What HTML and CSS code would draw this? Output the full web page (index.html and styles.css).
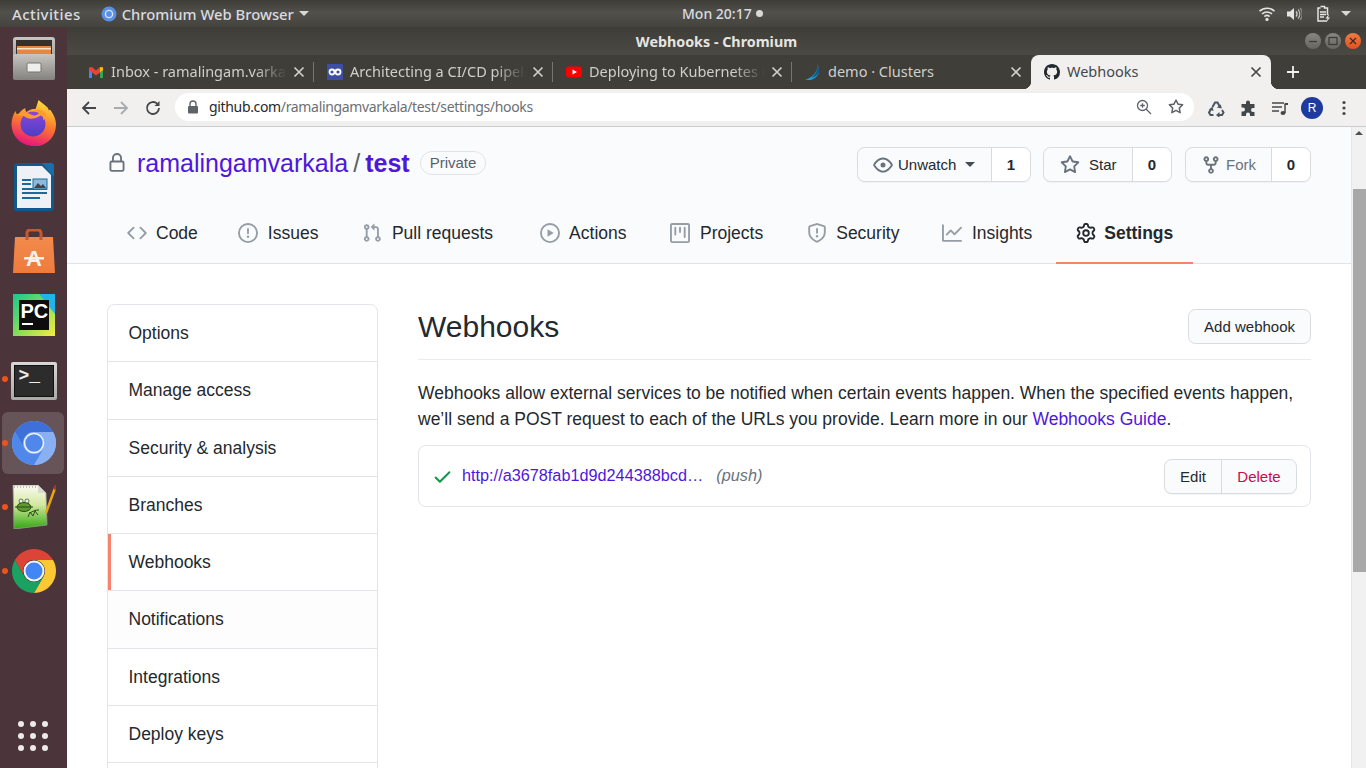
FILE: index.html
```html
<!DOCTYPE html>
<html lang="en">
<head>
    <meta charset="UTF-8">
    <meta name="viewport" content="width=device-width, initial-scale=1.0">
    <title>Webhooks - Chromium</title>
    <link rel="stylesheet" href="styles.css">
</head>
<body>
    <svg class="defs" width="0" height="0">
        <defs>
            <symbol id="i-code" viewBox="0 0 16 16"><path d="M4.72 3.22a.75.75 0 011.06 1.06L2.06 8l3.72 3.72a.75.75 0 11-1.06 1.06L.47 8.53a.75.75 0 010-1.06l4.25-4.25zm6.56 0a.75.75 0 10-1.06 1.06L13.94 8l-3.72 3.72a.75.75 0 101.06 1.06l4.25-4.25a.75.75 0 000-1.06l-4.25-4.25z"/></symbol>
            <symbol id="i-issue" viewBox="0 0 16 16"><path d="M8 1.5a6.5 6.5 0 100 13 6.5 6.5 0 000-13zM0 8a8 8 0 1116 0A8 8 0 010 8zm9 3a1 1 0 11-2 0 1 1 0 012 0zm-.25-6.25a.75.75 0 00-1.5 0v3.5a.75.75 0 001.5 0v-3.5z"/></symbol>
            <symbol id="i-pull" viewBox="0 0 16 16"><path d="M7.177 3.073L9.573.677A.25.25 0 0110 .854v4.792a.25.25 0 01-.427.177L7.177 3.427a.25.25 0 010-.354zM3.75 2.5a.75.75 0 100 1.5.75.75 0 000-1.5zm-2.25.75a2.25 2.25 0 113 2.122v5.256a2.251 2.251 0 11-1.5 0V5.372A2.25 2.25 0 011.5 3.25zM11 2.5h-1V4h1a1 1 0 011 1v5.628a2.251 2.251 0 101.5 0V5A2.5 2.5 0 0011 2.5zm1 10.25a.75.75 0 111.5 0 .75.75 0 01-1.5 0zM3.75 12a.75.75 0 100 1.5.75.75 0 000-1.5z"/></symbol>
            <symbol id="i-play" viewBox="0 0 16 16"><path d="M1.5 8a6.5 6.5 0 1113 0 6.5 6.5 0 01-13 0zM8 0a8 8 0 100 16A8 8 0 008 0zM6.379 5.227A.25.25 0 006 5.442v5.117a.25.25 0 00.379.214l4.264-2.559a.25.25 0 000-.428L6.379 5.227z"/></symbol>
            <symbol id="i-project" viewBox="0 0 16 16"><path d="M1.75 0A1.75 1.75 0 000 1.75v12.5C0 15.216.784 16 1.75 16h12.5A1.75 1.75 0 0016 14.25V1.75A1.75 1.75 0 0014.25 0H1.75zM1.5 1.75a.25.25 0 01.25-.25h12.5a.25.25 0 01.25.25v12.5a.25.25 0 01-.25.25H1.75a.25.25 0 01-.25-.25V1.75zM11.75 3a.75.75 0 00-.75.75v7.5a.75.75 0 001.5 0v-7.5a.75.75 0 00-.75-.75zm-8.25.75a.75.75 0 011.5 0v5.5a.75.75 0 01-1.5 0v-5.5zM8 3a.75.75 0 00-.75.75v3.5a.75.75 0 001.5 0v-3.5A.75.75 0 008 3z"/></symbol>
            <symbol id="i-shield" viewBox="0 0 16 16"><path d="M7.467.133a1.75 1.75 0 011.066 0l5.25 1.68A1.75 1.75 0 0115 3.48V7c0 1.566-.32 3.182-1.303 4.682-.983 1.498-2.585 2.813-5.032 3.855a1.7 1.7 0 01-1.33 0c-2.447-1.042-4.049-2.357-5.032-3.855C1.32 10.182 1 8.566 1 7V3.48a1.75 1.75 0 011.217-1.667l5.25-1.68zm.61 1.429a.25.25 0 00-.153 0l-5.25 1.68a.25.25 0 00-.174.238V7c0 1.358.275 2.666 1.057 3.86.784 1.194 2.121 2.34 4.366 3.297a.2.2 0 00.154 0c2.245-.956 3.582-2.104 4.366-3.298C13.225 9.666 13.5 8.36 13.5 7V3.48a.25.25 0 00-.174-.237l-5.25-1.68zM9 10.5a1 1 0 11-2 0 1 1 0 012 0zm-.25-5.75a.75.75 0 10-1.5 0v3a.75.75 0 001.5 0v-3z"/></symbol>
            <symbol id="i-graph" viewBox="0 0 16 16"><path d="M1.5 1.75a.75.75 0 00-1.5 0v12.5c0 .414.336.75.75.75h14.5a.75.75 0 000-1.5H1.5V1.75zm14.28 2.53a.75.75 0 00-1.06-1.06L10 7.94 7.53 5.47a.75.75 0 00-1.06 0L3.22 8.72a.75.75 0 001.06 1.06L7 7.06l2.47 2.47a.75.75 0 001.06 0l5.25-5.25z"/></symbol>
            <symbol id="i-gear" viewBox="0 0 16 16"><path d="M7.429 1.525a6.593 6.593 0 011.142 0c.036.003.108.036.137.146l.289 1.105c.147.56.55.967.997 1.189.174.086.341.183.501.29.417.278.97.423 1.53.27l1.102-.303c.11-.03.175.016.195.046.219.31.41.641.573.989.014.031.022.11-.059.19l-.815.806c-.411.406-.562.957-.53 1.456a4.588 4.588 0 010 .582c-.032.499.119 1.05.53 1.456l.815.806c.08.08.073.159.059.19a6.494 6.494 0 01-.573.99c-.02.029-.086.074-.195.045l-1.103-.303c-.559-.153-1.112-.008-1.529.27-.16.107-.327.204-.5.29-.449.222-.851.628-.998 1.189l-.289 1.105c-.029.11-.101.143-.137.146a6.613 6.613 0 01-1.142 0c-.036-.003-.108-.037-.137-.146l-.289-1.105c-.147-.56-.55-.967-.997-1.189a4.502 4.502 0 01-.501-.29c-.417-.278-.97-.423-1.53-.27l-1.102.303c-.11.03-.175-.016-.195-.046a6.492 6.492 0 01-.573-.989c-.014-.031-.022-.11.059-.19l.815-.806c.411-.406.562-.957.53-1.456a4.587 4.587 0 010-.582c.032-.499-.119-1.05-.53-1.456l-.815-.806c-.08-.08-.073-.159-.059-.19a6.44 6.44 0 01.573-.99c.02-.029.086-.075.195-.045l1.103.303c.559.153 1.112.008 1.529-.27.16-.107.327-.204.5-.29.449-.222.851-.628.998-1.189l.289-1.105c.029-.11.101-.143.137-.146zM8 0c-.236 0-.47.01-.701.03-.743.065-1.29.615-1.458 1.261l-.29 1.106c-.017.066-.078.158-.211.224a5.994 5.994 0 00-.668.386c-.123.082-.233.09-.3.071L3.27 2.776c-.644-.177-1.392.02-1.82.63a7.977 7.977 0 00-.704 1.217c-.315.675-.111 1.422.363 1.891l.815.806c.05.048.098.147.088.294a6.084 6.084 0 000 .772c.01.147-.038.246-.088.294l-.815.806c-.474.469-.678 1.216-.363 1.891.2.428.436.835.704 1.218.428.609 1.176.806 1.82.63l1.103-.303c.066-.019.176-.011.299.071.213.143.436.272.668.386.133.066.194.158.212.224l.289 1.106c.169.646.715 1.196 1.458 1.26a8.094 8.094 0 001.402 0c.743-.064 1.29-.614 1.458-1.26l.29-1.106c.017-.066.078-.158.211-.224a5.98 5.98 0 00.668-.386c.123-.082.233-.09.3-.071l1.102.302c.644.177 1.392-.02 1.82-.63.268-.382.505-.789.704-1.217.315-.675.111-1.422-.364-1.891l-.814-.806c-.05-.048-.098-.147-.088-.294a6.1 6.1 0 000-.772c-.01-.147.039-.246.088-.294l.814-.806c.475-.469.679-1.216.364-1.891a7.992 7.992 0 00-.704-1.218c-.428-.609-1.176-.806-1.82-.63l-1.103.303c-.066.019-.176.011-.299-.071a5.991 5.991 0 00-.668-.386c-.133-.066-.194-.158-.212-.224L10.16 1.29C9.99.645 9.444.095 8.701.031A8.094 8.094 0 008 0zm1.5 8a1.5 1.5 0 11-3 0 1.5 1.5 0 013 0zM11 8a3 3 0 11-6 0 3 3 0 016 0z"/></symbol>
            <symbol id="i-lock" viewBox="0 0 16 16"><path d="M4 4v2h-.25A1.75 1.75 0 002 7.75v5.5c0 .966.784 1.75 1.75 1.75h8.5A1.75 1.75 0 0014 13.25v-5.5A1.75 1.75 0 0012.25 6H12V4a4 4 0 10-8 0zm6.5 2V4a2.5 2.5 0 00-5 0v2h5zM12 7.5h.25a.25.25 0 01.25.25v5.5a.25.25 0 01-.25.25h-8.5a.25.25 0 01-.25-.25v-5.5a.25.25 0 01.25-.25H12z"/></symbol>
            <symbol id="i-eye" viewBox="0 0 16 16"><path d="M1.679 7.932c.412-.621 1.242-1.75 2.366-2.717C5.175 4.242 6.527 3.5 8 3.5c1.473 0 2.824.742 3.955 1.715 1.124.967 1.954 2.096 2.366 2.717a.119.119 0 010 .136c-.412.621-1.242 1.75-2.366 2.717C10.825 11.758 9.473 12.5 8 12.5c-1.473 0-2.824-.742-3.955-1.715C2.92 9.818 2.09 8.69 1.679 8.068a.119.119 0 010-.136zM8 2c-1.981 0-3.67.992-4.933 2.078C1.797 5.169.88 6.423.43 7.1a1.619 1.619 0 000 1.798c.45.678 1.367 1.932 2.637 3.024C4.329 13.008 6.019 14 8 14c1.981 0 3.67-.992 4.933-2.078 1.27-1.091 2.187-2.345 2.637-3.023a1.619 1.619 0 000-1.798c-.45-.678-1.367-1.932-2.637-3.023C11.671 2.992 9.981 2 8 2zm0 8a2 2 0 100-4 2 2 0 000 4z"/></symbol>
            <symbol id="i-star" viewBox="0 0 16 16"><path d="M8 .25a.75.75 0 01.673.418l1.882 3.815 4.21.612a.75.75 0 01.416 1.279l-3.046 2.97.719 4.192a.75.75 0 01-1.088.791L8 12.347l-3.766 1.98a.75.75 0 01-1.088-.79l.72-4.194L.818 6.374a.75.75 0 01.416-1.28l4.21-.611L7.327.668A.75.75 0 018 .25zm0 2.445L6.615 5.5a.75.75 0 01-.564.41l-3.097.45 2.24 2.184a.75.75 0 01.216.664l-.528 3.084 2.769-1.456a.75.75 0 01.698 0l2.77 1.456-.53-3.084a.75.75 0 01.216-.664l2.24-2.183-3.096-.45a.75.75 0 01-.564-.41L8 2.694v.001z"/></symbol>
            <symbol id="i-fork" viewBox="0 0 16 16"><path d="M5 3.25a.75.75 0 11-1.5 0 .75.75 0 011.5 0zm0 2.122a2.25 2.25 0 10-1.5 0v.878A2.25 2.25 0 005.75 8.5h1.5v2.128a2.251 2.251 0 101.5 0V8.5h1.5a2.25 2.25 0 002.25-2.25v-.878a2.25 2.25 0 10-1.5 0v.878a.75.75 0 01-.75.75h-4.5A.75.75 0 015 6.25v-.878zm3.75 7.378a.75.75 0 11-1.5 0 .75.75 0 011.5 0zm3-8.75a.75.75 0 100-1.5.75.75 0 000 1.5z"/></symbol>
            <symbol id="i-check" viewBox="0 0 16 16"><path d="M13.78 4.22a.75.75 0 010 1.06l-7.25 7.25a.75.75 0 01-1.06 0L2.22 9.28a.75.75 0 011.06-1.06L6 10.94l6.72-6.72a.75.75 0 011.06 0z"/></symbol>
            <symbol id="i-octocat" viewBox="0 0 16 16"><path d="M8 0C3.58 0 0 3.58 0 8c0 3.54 2.29 6.53 5.47 7.59.4.07.55-.17.55-.38 0-.19-.01-.82-.01-1.49-2.01.37-2.53-.49-2.69-.94-.09-.23-.48-.94-.82-1.13-.28-.15-.68-.52-.01-.53.63-.01 1.08.58 1.23.82.72 1.21 1.87.87 2.33.66.07-.52.28-.87.51-1.07-1.78-.2-3.64-.89-3.64-3.95 0-.87.31-1.59.82-2.15-.08-.2-.36-1.02.08-2.12 0 0 .67-.21 2.2.82.64-.18 1.32-.27 2-.27.68 0 1.36.09 2 .27 1.53-1.04 2.2-.82 2.2-.82.44 1.1.16 1.92.08 2.12.51.56.82 1.27.82 2.15 0 3.07-1.87 3.75-3.65 3.95.29.25.54.73.54 1.48 0 1.07-.01 1.93-.01 2.2 0 .21.15.46.55.38A8.013 8.013 0 0016 8c0-4.42-3.58-8-8-8z"/></symbol>
            <symbol id="i-close" viewBox="0 0 16 16"><path d="M3.5 3.5l9 9M12.5 3.5l-9 9" fill="none" stroke="currentColor" stroke-width="1.7"/></symbol>
            <linearGradient id="g-cabinet" x1="0" y1="0" x2="0" y2="1"><stop offset="0" stop-color="#c6c5c1"/><stop offset="1" stop-color="#83827f"/></linearGradient>
            <linearGradient id="g-ff" x1="0.7" y1="0" x2="0.4" y2="1"><stop offset="0" stop-color="#ffe03a"/><stop offset="0.5" stop-color="#ff7a2c"/><stop offset="1" stop-color="#e4127f"/></linearGradient>
            <linearGradient id="g-ff2" x1="0" y1="0" x2="0" y2="1"><stop offset="0" stop-color="#8a45d6"/><stop offset="1" stop-color="#4b3fc6"/></linearGradient>
            <linearGradient id="g-bag" x1="0" y1="0" x2="0" y2="1"><stop offset="0" stop-color="#f28a4c"/><stop offset="1" stop-color="#ee7b3c"/></linearGradient>
            <linearGradient id="g-pc" x1="0" y1="0" x2="1" y2="1"><stop offset="0" stop-color="#12c98f"/><stop offset="0.55" stop-color="#8fdc5a"/><stop offset="1" stop-color="#f6ee3e"/></linearGradient>
            <linearGradient id="g-pad" x1="0" y1="0" x2="0" y2="1"><stop offset="0" stop-color="#fbfbf4"/><stop offset="0.45" stop-color="#d4e8a0"/><stop offset="1" stop-color="#2fa80f"/></linearGradient>
        </defs>
    </svg>

    <header class="topbar">
        <div class="topbar-left">
            <span class="activities">Activities</span>
            <span class="app-menu">
                <svg class="app-icon" width="16" height="16" viewBox="0 0 16 16"><circle cx="8" cy="8" r="7.5" fill="#5a8fe6"/><circle cx="8" cy="8" r="3.6" fill="#5a8fe6" stroke="#d9e5fa" stroke-width="1.4"/></svg>
                Chromium Web Browser
                <i class="caret"></i>
            </span>
        </div>
        <div class="clock">Mon 20:17<i class="clock-dot"></i></div>
        <div class="tray">
            <svg width="18" height="16" viewBox="0 0 18 16"><g fill="none" stroke="#e4e4e2" stroke-width="1.6"><path d="M1.5 5.2a11 11 0 0 1 15 0"/><path d="M4 8a7.4 7.4 0 0 1 10 0"/><path d="M6.4 10.6a3.8 3.8 0 0 1 5.2 0"/></g><circle cx="9" cy="13.4" r="1.6" fill="#e4e4e2"/></svg>
            <svg class="tray-speaker" width="16" height="16" viewBox="0 0 16 16"><path d="M1 5.5h3L8 2v12l-4-3.500H1z" fill="#e4e4e2"/><g fill="none" stroke="#e4e4e2" stroke-width="1.300"><path d="M10 5.500a3.500 3.500 0 0 1 0 5" opacity=".9"/><path d="M12 3.500a6.500 6.500 0 0 1 0 9" opacity=".7"/><path d="M14 2a9 9 0 0 1 0 12" opacity=".4"/></g></svg>
            <svg class="tray-battery" width="16" height="18" viewBox="0 0 16 18"><path d="M4.500 1.500h4v1.500H11.500v7M11 16H2V3h2.500" fill="none" stroke="#e4e4e2" stroke-width="1.500"/><path d="M4 7h6M4 9.500h6M4 12h4" stroke="#e4e4e2" stroke-width="1.300"/><path d="M12.500 9.500l-3 4h2l-1 3.500 3.500-4.500h-2l1-3z" fill="#e4e4e2"/></svg>
            <i class="caret tray-caret"></i>
        </div>
    </header>

    <div class="desktop">
        <aside class="dock">
            <div class="dock-item">
                <svg width="42" height="44" viewBox="0 0 42 44">
                    <rect x="0" y="0" width="42" height="43" rx="3" fill="url(#g-cabinet)"/>
                    <rect x="3" y="3" width="36" height="15" fill="#33312e"/>
                    <rect x="4" y="9" width="34" height="8" fill="#e8863f"/>
                    <rect x="4" y="11" width="34" height="1.500" fill="#fbe3c4"/>
                    <rect x="0" y="17" width="42" height="26" rx="2" fill="url(#g-cabinet)"/>
                    <rect x="14" y="26" width="14" height="9" rx="1.500" fill="#eeeeec" stroke="#76756f"/>
                </svg>
            </div>
            <div class="dock-item">
                <svg width="46" height="46" viewBox="0 0 46 46">
                    <path d="M23 46C10 46 .5 36 .5 24c0-5 2-10 4-13 .5 2 1.500 3.500 2.500 4.500C8.500 12 11 9.500 14.500 8c-.5 1.500 0 3 1 4 3-2.500 6-3 9-3 1.500-3.500 2-6 3-9 3 3 7 5 9.500 8 .5 1 .5 1.500 .5 2.500 .5-.5 1-.5 1.500-1 3 4 6 9 6 15 0 13-10 22-22 22z" fill="url(#g-ff)"/>
                    <circle cx="22" cy="24" r="12.500" fill="url(#g-ff2)"/>
                    <path d="M5 15c5-3 10-3 14-1 3 2 7 2 9-1-1-2-4-3-7-1 2-3 9-4 13 1 2 3 1 6-2 7 1-3-1-5-3-4-5 3-12 4-16 0-3 0-6-1-8-1z" fill="#ff9a2e"/>
                </svg>
            </div>
            <div class="dock-item">
                <svg width="40" height="48" viewBox="0 0 40 48">
                    <rect x="0" y="0" width="40" height="48" rx="3" fill="#0f5a8a"/>
                    <path d="M3 3h25l9 9v33H3z" fill="#eef2f6"/>
                    <path d="M28 0h9a3 3 0 0 1 3 3v11z" fill="#1a6fa8"/>
                    <path d="M8 17h9M8 21h9M8 26h25M8 30h25M8 35h18" stroke="#1c6a9c" stroke-width="2"/>
                    <rect x="19" y="16" width="14" height="10" fill="#8fb9d8" stroke="#1c6a9c"/>
                    <path d="M20 25l4-5 3 3 2-2 3 4z" fill="#444"/>
                </svg>
            </div>
            <div class="dock-item">
                <svg width="42" height="44" viewBox="0 0 42 44">
                    <path d="M2 8h38l2 36H0z" fill="url(#g-bag)"/>
                    <path d="M14 11V4a3 3 0 0 1 3-3h8a3 3 0 0 1 3 3v7" fill="none" stroke="#c9592a" stroke-width="3"/>
                    <text class="bag-letter" x="21" y="37" text-anchor="middle">A</text>
                    <rect x="11" y="28" width="20" height="2.500" fill="#f7f1ec"/>
                </svg>
            </div>
            <div class="dock-item">
                <svg width="42" height="42" viewBox="0 0 42 42">
                    <rect width="42" height="42" fill="url(#g-pc)"/>
                    <path d="M26 0h16v20z" fill="#1fb5e8"/>
                    <rect x="6" y="6" width="30" height="30" fill="#0d0d0d"/>
                    <text class="pc-letters" x="7.500" y="24">PC</text>
                    <rect x="9" y="29" width="11" height="2" fill="#fff"/>
                </svg>
            </div>
            <div class="dock-item">
                <i class="running"></i>
                <div class="terminal-icon"><span class="prompt">&gt;_</span></div>
            </div>
            <div class="dock-item dock-active">
                <i class="running"></i>
                <svg width="44" height="44" viewBox="0 0 44 44">
                    <circle cx="22" cy="22" r="22" fill="#8ab0f4"/>
                    <path d="M2.950 11A22 22 0 0 1 41.050 11H22A11 11 0 0 0 12.470 27.500z" fill="#3d70d8"/>
                    <path d="M2.950 11A22 22 0 0 1 41.050 11H22A11 11 0 0 0 12.470 27.500z" fill="#8ab0f4" transform="rotate(120 22 22)"/>
                    <path d="M2.950 11A22 22 0 0 1 41.050 11H22A11 11 0 0 0 12.470 27.500z" fill="#4f88ea" transform="rotate(240 22 22)"/>
                    <circle cx="22" cy="22" r="9.500" fill="#4f88ea" stroke="#eef3fc" stroke-width="1.600"/>
                </svg>
            </div>
            <div class="dock-item">
                <i class="running"></i>
                <svg width="44" height="44" viewBox="0 0 44 44">
                    <path d="M1 0h25l8 8 1 32L2 44z" fill="url(#g-pad)" stroke="#9a9a90" stroke-width=".8"/>
                    <path d="M26 0v8h8z" fill="#d8d8cc"/>
                    <path d="M2 2h23" stroke="#888" stroke-width="1" stroke-dasharray="1 2"/>
                    <path d="M34 28L43 3" stroke="#e8a412" stroke-width="2.500"/>
                    <path d="M42.500 4.500L44 0" stroke="#a33" stroke-width="2.500"/>
                    <ellipse cx="12" cy="22" rx="7" ry="4.500" fill="#5e9a32" stroke="#2a4a14"/>
                    <circle cx="9" cy="16" r="2" fill="#eee" stroke="#2a4a14" stroke-width=".7"/>
                    <circle cx="15" cy="16" r="2" fill="#eee" stroke="#2a4a14" stroke-width=".7"/>
                    <path d="M3 22h18M18 28c3-2 5-3 9-3M16 32l2-5 3 4 2-5 3 4" fill="none" stroke="#264a14" stroke-width="1"/>
                </svg>
            </div>
            <div class="dock-item">
                <i class="running"></i>
                <svg width="44" height="44" viewBox="0 0 44 44">
                    <path d="M2.950 11A22 22 0 0 1 41.050 11H22A11 11 0 0 0 12.470 27.500z" fill="#db4437"/>
                    <path d="M2.950 11A22 22 0 0 1 41.050 11H22A11 11 0 0 0 12.470 27.500z" fill="#fcc934" transform="rotate(120 22 22)"/>
                    <path d="M2.950 11A22 22 0 0 1 41.050 11H22A11 11 0 0 0 12.470 27.500z" fill="#1aa260" transform="rotate(240 22 22)"/>
                    <circle cx="22" cy="22" r="9.500" fill="#4285f4" stroke="#f5f5f5" stroke-width="2"/>
                </svg>
            </div>
            <div class="app-grid">
                <i></i><i></i><i></i><i></i><i></i><i></i><i></i><i></i><i></i>
            </div>
        </aside>

        <div class="window">
            <div class="titlebar">
                <span class="window-title">Webhooks - Chromium</span>
                <div class="window-buttons">
                    <span class="win-btn"><svg width="16" height="16" viewBox="0 0 16 16"><path d="M4 8.500h8" stroke="#3a3a38" stroke-width="1.200"/></svg></span>
                    <span class="win-btn"><svg width="16" height="16" viewBox="0 0 16 16"><rect x="4" y="4.500" width="8" height="7" fill="none" stroke="#3a3a38" stroke-width="1.200"/></svg></span>
                    <span class="win-btn win-close"><svg width="16" height="16" viewBox="0 0 16 16"><path d="M5 5l6 6M11 5l-6 6" stroke="#3a2a20" stroke-width="1.200"/></svg></span>
                </div>
            </div>

            <div class="tabstrip">
                <div class="tab">
                    <svg class="favicon" viewBox="0 0 16 16"><path d="M1 3.500V14h3V7z" fill="#4285f4"/><path d="M15 3.500V14h-3V7z" fill="#34a853"/><path d="M1 3.500L4 3l4 3.500L12 3l3 .5L15 6l-3 2.500L8 11.500 4 8.500 1 6z" fill="#ea4335"/><path d="M12 3l3 .5V6l-3 2.500z" fill="#fbbc04"/></svg>
                    <span class="tab-title tab-fade">Inbox - ramalingam.varkala@gmail.com</span>
                    <svg class="tab-close"><use href="#i-close"/></svg>
                </div>
                <div class="tab">
                    <svg class="favicon" viewBox="0 0 16 16"><rect width="16" height="16" rx="1" fill="#3d4fa5"/><g fill="none" stroke="#fff" stroke-width="1.800"><circle cx="5" cy="8" r="2.500"/><circle cx="11" cy="8" r="2.500"/></g></svg>
                    <span class="tab-title tab-fade">Architecting a CI/CD pipeline on Kubernetes</span>
                    <svg class="tab-close"><use href="#i-close"/></svg>
                </div>
                <div class="tab">
                    <svg class="favicon" viewBox="0 0 16 16"><rect y="2.500" width="16" height="11" rx="3" fill="#f00"/><path d="M6.500 5.500L11 8l-4.500 2.500z" fill="#fff"/></svg>
                    <span class="tab-title tab-fade">Deploying to Kubernetes using Helm</span>
                    <svg class="tab-close"><use href="#i-close"/></svg>
                </div>
                <div class="tab tab-last">
                    <svg class="favicon" viewBox="0 0 16 16"><path d="M12 0c1 6-2 12-12 16 5 1 12-1 14-8 .5-3-1-6-2-8z" fill="#1e9fd6"/><path d="M12 0c1 5-1 10-6 14 4-1 7-3 8-6 .5-3-1-6-2-8z" fill="#14577f"/></svg>
                    <span class="tab-title">demo · Clusters</span>
                    <svg class="tab-close"><use href="#i-close"/></svg>
                </div>
                <div class="tab tab-active">
                    <svg class="favicon"><use href="#i-octocat"/></svg>
                    <span class="tab-title">Webhooks</span>
                    <svg class="tab-close"><use href="#i-close"/></svg>
                </div>
                <svg class="new-tab" width="16" height="16" viewBox="0 0 16 16"><path d="M8 2v12M2 8h12" stroke="#f1f0ef" stroke-width="1.800"/></svg>
            </div>

            <div class="toolbar">
                <svg class="tool" width="18" height="18" viewBox="0 0 18 18"><path d="M16 9H3M9 3L3 9l6 6" fill="none" stroke="#44474a" stroke-width="1.800"/></svg>
                <svg class="tool" width="18" height="18" viewBox="0 0 18 18"><path d="M2 9h13M9 3l6 6-6 6" fill="none" stroke="#a9abad" stroke-width="1.800"/></svg>
                <svg class="tool" width="18" height="18" viewBox="0 0 18 18"><path d="M15 9a6 6 0 1 1-1.800-4.300" fill="none" stroke="#44474a" stroke-width="1.800"/><path d="M15.500 2v5h-5z" fill="#44474a"/></svg>
                <div class="omnibox">
                    <svg class="omni-lock" width="12" height="14" viewBox="0 0 12 14"><path d="M3 6V4a3 3 0 0 1 6 0v2" fill="none" stroke="#5f6368" stroke-width="1.400"/><rect x="1" y="6" width="10" height="7.500" rx="1" fill="#5f6368"/></svg>
                    <span class="url"><b>github.com</b>/ramalingamvarkala/test/settings/hooks</span>
                    <svg class="omni-zoom" width="16" height="16" viewBox="0 0 16 16"><g fill="none" stroke="#5f6368" stroke-width="1.300"><circle cx="6.500" cy="6.500" r="5"/><path d="M10 10l5 5M4.200 6.500h4.600M6.500 4.200v4.600"/></g></svg>
                    <svg class="omni-star" width="16" height="16" fill="#5f6368"><use href="#i-star"/></svg>
                </div>
                <svg class="tool" width="18" height="18" viewBox="0 0 18 18"><g fill="none" stroke="#4a5560" stroke-width="2"><path d="M5.500 8L8 3.500h2.500L12.500 7"/><path d="M15 11l1.500 2.500-1.500 2.500h-4"/><path d="M6.500 16H3.500L2 13.500 4 10"/></g><path d="M14.800 9.500l-5-1 4-3zM9 16l3.500-3v6zM5.500 7.500l1 4.500L2 10.500z" fill="#4a5560"/></svg>
                <svg class="tool" width="18" height="18" viewBox="0 0 18 18"><path d="M7 3.500a2 2 0 0 1 4 0V5h4.500v4H14a2 2 0 0 0 0 4h1.500v4H11v-1.500a2 2 0 0 0-4 0V17H2.500v-4.500H4a2 2 0 0 0 0-4H2.500V5H7z" fill="#44474a"/></svg>
                <svg class="tool tool-music" width="18" height="18" viewBox="0 0 18 18"><path d="M1 4h12M1 8h10M1 12h7" stroke="#44474a" stroke-width="1.500"/><path d="M14 4.500V14" stroke="#44474a" stroke-width="1.500"/><ellipse cx="12" cy="14" rx="2.500" ry="2" fill="#44474a"/><path d="M14 4h3v2h-3z" fill="#44474a"/></svg>
                <span class="avatar">R</span>
                <svg class="tool" width="18" height="18" viewBox="0 0 18 18"><g fill="#44474a"><circle cx="9" cy="3.500" r="1.600"/><circle cx="9" cy="9" r="1.600"/><circle cx="9" cy="14.500" r="1.600"/></g></svg>
            </div>

            <div class="viewport">
                <div class="page">
                    <section class="repo-head">
                        <div class="repo-row">
                            <svg class="repo-lock"><use href="#i-lock"/></svg>
                            <h1 class="repo-name"><a href="#">ramalingamvarkala</a><span class="slash">/</span><a href="#" class="repo-strong">test</a></h1>
                            <span class="pill">Private</span>
                            <div class="repo-actions">
                                <div class="btn-group">
                                    <span class="btn btn-wide"><svg class="btn-icon"><use href="#i-eye"/></svg>Unwatch<i class="btn-caret"></i></span>
                                    <span class="count">1</span>
                                </div>
                                <div class="btn-group">
                                    <span class="btn btn-star"><svg class="btn-icon"><use href="#i-star"/></svg>Star</span>
                                    <span class="count">0</span>
                                </div>
                                <div class="btn-group group-fork">
                                    <span class="btn btn-fork"><svg class="btn-icon"><use href="#i-fork"/></svg>Fork</span>
                                    <span class="count">0</span>
                                </div>
                            </div>
                        </div>
                        <nav class="repo-tabs">
                            <a class="repo-tab" href="#"><svg><use href="#i-code"/></svg>Code</a>
                            <a class="repo-tab" href="#"><svg><use href="#i-issue"/></svg>Issues</a>
                            <a class="repo-tab" href="#"><svg><use href="#i-pull"/></svg>Pull requests</a>
                            <a class="repo-tab" href="#"><svg><use href="#i-play"/></svg>Actions</a>
                            <a class="repo-tab" href="#"><svg><use href="#i-project"/></svg>Projects</a>
                            <a class="repo-tab" href="#"><svg><use href="#i-shield"/></svg>Security</a>
                            <a class="repo-tab" href="#"><svg><use href="#i-graph"/></svg>Insights</a>
                            <a class="repo-tab repo-tab-on" href="#"><svg><use href="#i-gear"/></svg>Settings</a>
                        </nav>
                    </section>

                    <div class="settings">
                        <ul class="side-menu">
                            <li>Options</li>
                            <li>Manage access</li>
                            <li>Security &amp; analysis</li>
                            <li>Branches</li>
                            <li class="side-on">Webhooks</li>
                            <li class="side-hover">Notifications</li>
                            <li>Integrations</li>
                            <li>Deploy keys</li>
                            <li>Secrets</li>
                        </ul>
                        <main class="hooks">
                            <div class="hooks-head">
                                <h2>Webhooks</h2>
                                <span class="btn btn-single">Add webhook</span>
                            </div>
                            <p class="hooks-intro">Webhooks allow external services to be notified when certain events happen. When the specified events happen, we’ll send a POST request to each of the URLs you provide. Learn more in our <a href="#">Webhooks Guide</a>.</p>
                            <div class="hook-box">
                                <svg class="hook-check"><use href="#i-check"/></svg>
                                <a class="hook-url" href="#">http://a3678fab1d9d244388bcd…</a>
                                <em class="hook-event">(push)</em>
                                <div class="btn-group hook-btns">
                                    <span class="btn btn-edit">Edit</span>
                                    <span class="btn btn-delete">Delete</span>
                                </div>
                            </div>
                        </main>
                    </div>
                </div>
                <div class="scrollbar">
                    <i class="scroll-up"></i>
                    <div class="scroll-thumb"></div>
                </div>
            </div>
        </div>
    </div>
</body>
</html>
```

FILE: styles.css
```css
* {
    box-sizing: border-box;
}

html, body {
    margin: 0;
    height: 768px;
    overflow: hidden;
}

body {
    display: flex;
    flex-direction: column;
    width: 1366px;
    font-family: "Liberation Sans", Arial, sans-serif;
    color: #24292e;
    background: #fff;
}

svg {
    fill-rule: evenodd;
}

a {
    color: #4f17dc;
    text-decoration: none;
}

i {
    font-style: normal;
}

.defs {
    position: absolute;
}

/* ubuntu top bar */
.topbar {
    height: 27px;
    flex: none;
    display: grid;
    grid-template-columns: 670px auto 1fr;
    align-items: center;
    padding: 0 0 0 12px;
    background: linear-gradient(#3d3c37, #52504a 45%, #45433e);
    color: #d8dbe0;
    font-family: "Noto Sans", sans-serif;
    font-size: 15px;
    font-weight: 500;
}

.topbar-left {
    display: flex;
    align-items: center;
}

.activities {
    margin-right: 20px;
    letter-spacing: 0.4px;
}

.app-menu {
    display: flex;
    align-items: center;
    gap: 5px;
    font-size: 14.800px;
}

.caret {
    display: inline-block;
    width: 0;
    height: 0;
    border: 5px solid transparent;
    border-top: 5px solid #d8d8d4;
    border-bottom: 0;
}

.clock {
    display: flex;
    align-items: center;
    gap: 4px;
    font-size: 14px;
}

.clock-dot {
    width: 7px;
    height: 7px;
    border-radius: 50%;
    background: #d8d8d4;
}

.tray {
    display: flex;
    align-items: center;
    justify-content: flex-end;
    gap: 12px;
    padding-right: 15px;
}

.tray-speaker {
    margin-left: -2px;
}

.tray-battery {
    margin-left: 2px;
}

.tray-caret {
    margin-left: -3px;
}

.desktop {
    flex: 1;
    display: flex;
    min-height: 0;
}

/* dock */
.dock {
    width: 67px;
    flex: none;
    display: flex;
    flex-direction: column;
    background: #4b343a;
}

.dock-item {
    position: relative;
    height: 64px;
    flex: none;
    display: flex;
    align-items: center;
    justify-content: center;
}

.dock-active::before {
    content: "";
    position: absolute;
    left: 2px;
    top: 1px;
    width: 62px;
    height: 62px;
    border-radius: 6px;
    background: rgba(255, 255, 255, 0.16);
}

.dock-active svg {
    position: relative;
}

.running {
    position: absolute;
    left: 2px;
    top: 29px;
    width: 6px;
    height: 6px;
    border-radius: 50%;
    background: #e95420;
}

.terminal-icon {
    width: 46px;
    height: 38px;
    margin-top: 4px;
    padding: 3px;
    background: linear-gradient(#d8d8d6, #a9a9a6);
    border-radius: 2px;
}

.prompt {
    display: block;
    height: 100%;
    padding-left: 4px;
    background: #2c2c2c;
    border: 1px solid #111;
    color: #eee;
    font: bold 18px/20px "Liberation Mono", monospace;
}

.bag-letter {
    font: bold 22px "Liberation Sans", sans-serif;
    fill: #f7f1ec;
}

.pc-letters {
    font: bold 20px "Liberation Sans", sans-serif;
    fill: #fff;
}

.app-grid {
    margin: auto 0 17px 18px;
    display: grid;
    grid-template-columns: repeat(3, 6px);
    gap: 6px;
}

.app-grid i {
    height: 6px;
    border-radius: 50%;
    background: #ecebe9;
}

/* browser window */
.window {
    flex: 1;
    min-width: 0;
    display: flex;
    flex-direction: column;
}

.titlebar {
    height: 28px;
    flex: none;
    display: grid;
    grid-template-columns: 1fr auto 1fr;
    align-items: center;
    background: linear-gradient(#3e3d38, #4b4944);
    padding-right: 5px;
    padding-left: 5px;
}

.window-title {
    grid-column: 2;
    color: #e6e5e1;
    font: 700 14.300px "Noto Sans", sans-serif;
}

.window-buttons {
    display: flex;
    gap: 4px;
    justify-self: end;
}

.win-btn {
    width: 16px;
    height: 16px;
    border-radius: 50%;
    background: linear-gradient(#87867f, #66655f);
}

.win-close {
    background: linear-gradient(#f07a45, #e0521e);
}

.tabstrip {
    height: 34px;
    flex: none;
    display: flex;
    align-items: center;
    padding-left: 8px;
    background: #3f3e38;
    color: #cfcfcb;
    font: 14.500px "Noto Sans", sans-serif;
}

.tab {
    width: 239px;
    height: 34px;
    flex: none;
    display: flex;
    align-items: center;
    padding: 0 7px 0 13px;
    position: relative;
}

.tab::after {
    content: "";
    position: absolute;
    right: 0;
    top: 7px;
    height: 20px;
    width: 1px;
    background: #77766f;
}

.tab-last::after {
    display: none;
}

.tab-active {
    width: 240px;
    background: #f1f0ef;
    color: #45474a;
    border-radius: 8px 8px 0 0;
}

/* the small curves where the active tab meets the toolbar */
.tab-active::before, .tab-active::after {
    content: "";
    position: absolute;
    top: auto;
    bottom: 0;
    width: 8px;
    height: 8px;
}

.tab-active::before {
    left: -8px;
    background: radial-gradient(circle at 0 0, transparent 8px, #f1f0ef 8.500px);
}

.tab-active::after {
    right: -8px;
    background: radial-gradient(circle at 100% 0, transparent 8px, #f1f0ef 8.500px);
}

.favicon {
    width: 16px;
    height: 16px;
    flex: none;
    margin-right: 7px;
    fill: #24292e;
}

.tab-title {
    flex: 1;
    min-width: 0;
    margin-bottom: 2px;
    white-space: nowrap;
    overflow: hidden;
}

.tab-fade {
    -webkit-mask-image: linear-gradient(to right, #000 82%, transparent 100%);
    mask-image: linear-gradient(to right, #000 82%, transparent 100%);
}

.tab-close {
    width: 16px;
    height: 16px;
    flex: none;
    margin-left: 4px;
}

.new-tab {
    margin-left: 14px;
}

.toolbar {
    height: 38px;
    flex: none;
    display: flex;
    align-items: center;
    padding: 0 0 0 13px;
    background: #f1f0ef;
    border-bottom: 1px solid #c8ccd3;
}

.tool {
    flex: none;
    margin-right: 14px;
}

.tool-music {
    margin-right: 12px;
}

.omnibox {
    width: 1019px;
    height: 28px;
    flex: none;
    margin: 0 13px 1px -1px;
    display: flex;
    align-items: center;
    padding: 0 10px 0 12px;
    background: #fff;
    border-radius: 15px;
    font: 14px "Noto Sans", sans-serif;
    letter-spacing: -0.34px;
    color: #6b6f73;
}

.omni-lock {
    flex: none;
    margin-right: 10px;
}

.url {
    flex: 1;
    margin-bottom: 2px;
}

.url b {
    font-weight: 400;
    color: #26282a;
}

.omni-zoom {
    margin-right: 16px;
}

.avatar {
    width: 22px;
    height: 22px;
    flex: none;
    margin-right: 12px;
    border-radius: 50%;
    background: #1f3a9e;
    color: #fff;
    font-size: 12px;
    line-height: 22px;
    text-align: center;
}

/* page */
.viewport {
    flex: 1;
    min-height: 0;
    display: flex;
}

.page {
    flex: 1;
    min-width: 0;
    overflow: hidden;
    font-size: 17.500px;
    background: #fff;
}

.repo-head {
    background: #fafbfc;
    border-bottom: 1px solid #e1e4e8;
    padding: 20px 40px 0 40px;
}

.repo-row {
    display: flex;
    align-items: center;
    height: 35px;
}

.repo-lock {
    width: 20px;
    height: 20px;
    margin: -4px 10px 0 0;
    fill: #6a737d;
}

.repo-name {
    margin: -4px 0 0;
    font-size: 25px;
    font-weight: 400;
    line-height: 32px;
}

.slash {
    margin: 0 5px;
    color: #586069;
}

.repo-strong {
    font-weight: 700;
}

.pill {
    margin: -3px 0 0 10px;
    padding: 0 9px;
    height: 24px;
    line-height: 22px;
    border: 1px solid #e1e4e8;
    border-radius: 12px;
    font-size: 15px;
    color: #586069;
}

.repo-actions {
    margin-left: auto;
    display: flex;
    gap: 12px;
}

.group-fork {
    margin-left: 1px;
}

.btn-group {
    display: flex;
    height: 35px;
    border: 1px solid #d9dbdd;
    border-radius: 7.500px;
    background: #fafbfc;
    font-size: 15px;
    box-shadow: 0 1px 0 rgba(27, 31, 35, 0.04);
}

.btn {
    display: flex;
    align-items: center;
    color: #24292e;
    font-size: 15px;
}

.btn-icon {
    width: 20px;
    height: 20px;
    fill: #6a737d;
}

.btn-wide {
    width: 133px;
    padding-left: 15px;
}

.btn-wide .btn-icon {
    margin-right: 5px;
}

.btn-caret {
    margin-left: 9px;
    width: 0;
    height: 0;
    border: 5px solid transparent;
    border-top-color: #444d56;
    border-bottom: 0;
}

.btn-star {
    width: 88px;
    padding-left: 16px;
}

.btn-star .btn-icon {
    margin-right: 9px;
}

.btn-fork {
    width: 85px;
    padding-left: 15px;
    color: #6a737d;
}

.btn-fork .btn-icon {
    margin-right: 5px;
}

.count {
    width: 39px;
    border-left: 1px solid #d9dbdd;
    background: #fff;
    border-radius: 0 7px 7px 0;
    font-size: 15px;
    font-weight: 700;
    line-height: 33px;
    text-align: center;
}

.repo-tabs {
    display: flex;
    margin-top: 22px;
    margin-bottom: -1px;
}

.repo-tab {
    height: 60px;
    display: flex;
    align-items: center;
    gap: 9.500px;
    padding: 0 24px 0 20px;
    border-bottom: 2.500px solid transparent;
    color: #24292e;
}

.repo-tab:first-child {
    gap: 9px;
    padding-right: 20.500px;
}

.repo-tab:nth-child(3) {
    padding-right: 26.500px;
}

.repo-tab:nth-child(5) {
    padding-right: 23.500px;
}

.repo-tab:nth-child(6) {
    padding-right: 23px;
}

.repo-tab svg {
    width: 20px;
    height: 20px;
    fill: #959da5;
}

.repo-tab-on {
    gap: 8px;
    padding-right: 20px;
    font-weight: 700;
    border-bottom-color: #f9826c;
}

.repo-tab-on svg {
    fill: #24292e;
}

.settings {
    display: flex;
    gap: 40px;
    padding: 40px 40px 0 40px;
}

.side-menu {
    width: 271px;
    flex: none;
    margin: 0;
    padding: 0;
    list-style: none;
    border: 1px solid #e1e4e8;
    border-radius: 7.500px;
}

.side-menu li {
    height: 57.250px;
    line-height: 57px;
    padding-left: 20.500px;
    border-bottom: 1px solid #e1e4e8;
    position: relative;
}

.side-hover {
    background: #fdfdfe;
}

.side-on::before {
    content: "";
    position: absolute;
    left: 0;
    top: 0;
    bottom: 0;
    width: 3px;
    background: #f9826c;
}

.hooks {
    flex: 1;
    min-width: 0;
    padding-top: 5px;
}

.hooks-head {
    display: flex;
    align-items: center;
    justify-content: space-between;
    padding-bottom: 15px;
    border-bottom: 1px solid #eaecef;
}

.hooks-head h2 {
    margin: 0;
    font-size: 30px;
    font-weight: 400;
    line-height: 35px;
}

.btn-single {
    height: 35px;
    padding: 0 15px;
    background: #fafbfc;
    border: 1px solid #d9dbdd;
    border-radius: 7.500px;
}

.hooks-intro {
    margin: 20px 0 13px;
    line-height: 26px;
}

.hook-box {
    height: 62px;
    display: flex;
    align-items: center;
    padding: 0 13px;
    border: 1px solid #e1e4e8;
    border-radius: 7.500px;
}

.hook-check {
    width: 21px;
    height: 21px;
    margin-right: 9px;
    fill: #14964a;
}

.hook-url {
    margin-bottom: 2px;
    font-size: 16.250px;
}

.hook-event {
    margin: 0 0 2px 13px;
    font-size: 16.250px;
    color: #6a737d;
}

.hook-btns {
    margin-left: auto;
}

.btn-edit {
    width: 57px;
    justify-content: center;
    border-right: 1px solid #d9dbdd;
}

.btn-delete {
    width: 74px;
    justify-content: center;
    color: #cb0a4f;
}

.scrollbar {
    width: 15px;
    flex: none;
    padding-left: 1px;
    background: #f1f1f1;
    border-left: 1px solid #e6e6e6;
}

.scroll-up {
    display: block;
    width: 0;
    height: 0;
    margin: 4px 0 0 2px;
    border: 4px solid transparent;
    border-bottom: 4px solid #505050;
    border-top: 0;
}

.scroll-thumb {
    height: 383px;
    margin-top: 54px;
    background: #a8a8a8;
}
```
